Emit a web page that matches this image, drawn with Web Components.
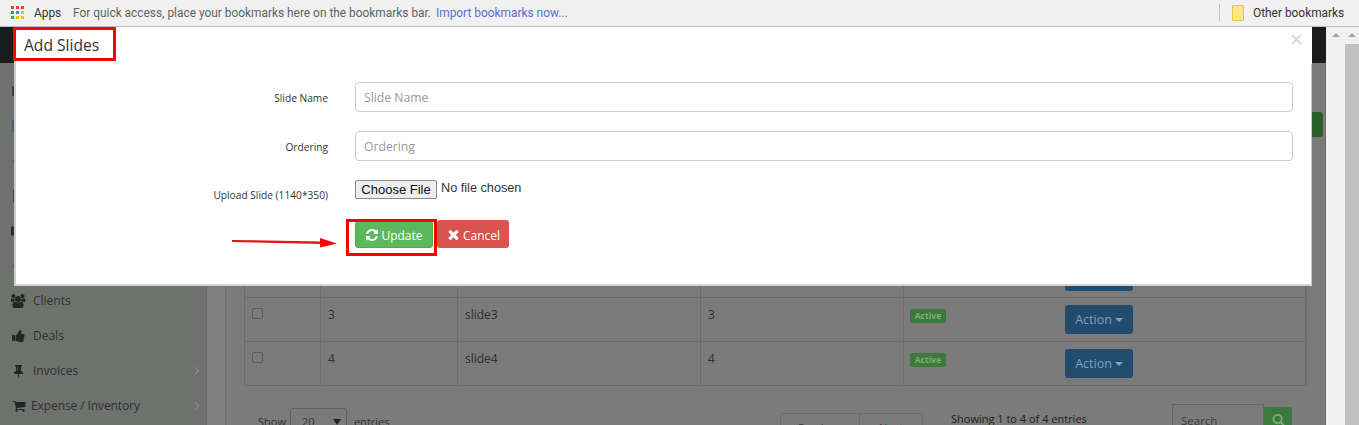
<!DOCTYPE html>
<html lang="en"><head><meta charset="utf-8"><title>Add Slides</title>
<style>
html,body{margin:0;padding:0;width:1359px;height:425px;overflow:hidden;background:#7b7b7b}
body{font-family:"Open Sans","Liberation Sans",sans-serif;position:relative}
</style></head><body>
<x-bookmark-bar></x-bookmark-bar>
<x-workspace>
  <x-page></x-page>
  <x-scrollbars></x-scrollbars>
</x-workspace>
<x-slide-modal heading="Add Slides">
  <x-field label="Slide Name" placeholder="Slide Name"></x-field>
  <x-field label="Ordering" placeholder="Ordering"></x-field>
  <x-field label="Upload Slide (1140*350)" type="file"></x-field>
</x-slide-modal>
<script>
const ICON={
 refresh:['0 0 1792 1792','M1639 1056q0 5-1 7-64 268-268 434.5t-478 166.5q-146 0-282.5-55t-243.5-157l-129 129q-19 19-45 19t-45-19-19-45v-448q0-26 19-45t45-19h448q26 0 45 19t19 45-19 45l-137 137q71 66 161 102t187 36q134 0 250-65t186-179q11-17 53-117 8-23 30-23h192q13 0 22.5 9.5t9.5 22.5zm25-800v448q0 26-19 45t-45 19h-448q-26 0-45-19t-19-45 19-45l138-138q-148-137-349-137-134 0-250 65t-186 179q-11 17-53 117-8 23-30 23h-199q-13 0-22.5-9.5t-9.5-22.5v-7q65-268 270-434.5t480-166.5q146 0 284 55.5t245 156.5l130-129q19-19 45-19t45 19 19 45z'],
 times:['0 0 1792 1792','M1490 1322q0 40-28 68l-136 136q-28 28-68 28t-68-28l-294-294-294 294q-28 28-68 28t-68-28l-136-136q-28-28-28-68t28-68l294-294-294-294q-28-28-28-68t28-68l136-136q28-28 68-28t68 28l294 294 294-294q28-28 68-28t68 28l136 136q28 28 28 68t-28 68l-294 294 294 294q28 28 28 68z'],
 search:['0 0 1792 1792','M1216 832q0-185-131.5-316.5t-316.5-131.5-316.5 131.5-131.5 316.5 131.5 316.5 316.5 131.5 316.5-131.5 131.5-316.5zm512 832q0 52-38 90t-90 38q-54 0-90-38l-343-342q-179 124-399 124-143 0-273.5-55.5t-225-150-150-225-55.5-273.5 55.5-273.5 150-225 225-150 273.5-55.5 273.5 55.5 225 150 150 225 55.5 273.5q0 220-124 399l343 343q37 37 37 90z'],
 cart:['0 0 1792 1792','M704 1536q0 52-38 90t-90 38-90-38-38-90 38-90 90-38 90 38 38 90zm896 0q0 52-38 90t-90 38-90-38-38-90 38-90 90-38 90 38 38 90zm128-1088v512q0 24-16.5 42.5t-40.5 21.5l-1044 122q13 60 13 70 0 16-24 64h920q26 0 45 19t19 45-19 45-45 19h-1024q-26 0-45-19t-19-45q0-11 8-31.5t16-36 21.5-40 15.5-29.5l-177-823h-204q-26 0-45-19t-19-45 19-45 45-19h256q16 0 28.5 6.5t19.5 15.5 13 24.5 8 26 5.5 29.5 4.5 26h1201q26 0 45 19t19 45z'],
 pin:['0 0 1152 1792','M480 864v-448q0-14-9-23t-23-9-23 9-9 23v448q0 14 9 23t23 9 23-9 9-23zm672 352q0 26-19 45t-45 19h-429l-51 483q-2 12-10.5 20.5t-20.5 8.5h-1q-27 0-32-27l-76-485h-404q-26 0-45-19t-19-45q0-123 78.5-221.5t177.5-98.5v-512q-52 0-90-38t-38-90 38-90 90-38h640q52 0 90 38t38 90-38 90-90 38v512q99 0 177.5 98.5t78.5 221.5z'],
 thumb:['0 0 1664 1792','M256 1344q0-26-19-45t-45-19-45 19-19 45 19 45 45 19 45-19 19-45zm160-512v640q0 26-19 45t-45 19h-288q-26 0-45-19t-19-45v-640q0-26 19-45t45-19h288q26 0 45 19t19 45zm1184 0q0 86-55 149 15 44 15 76 3 76-43 137 17 56 0 117-15 57-54 94 9 112-49 181-64 76-197 78h-129q-66 0-144-15.5t-121.5-29-120.5-39.5q-123-43-158-44-26-1-45-19.5t-19-44.5v-641q0-25 18-43.5t43-20.5q24-2 76-59t101-121q68-87 101-120 18-18 31-48t17.5-48.5 13.5-60.5q7-39 12.5-61t19.5-52 34-50q19-19 45-19 46 0 82.5 10.5t60 26 40 40.5 24 45 12 50 5 45 .5 39q0 38-9.5 76t-19 60-27.5 56q-3 6-10 18t-11 22-8 24h277q78 0 135 57t57 135z'],
 users:['0 0 1920 1792','M529 896q-162 5-265 128h-134q-82 0-138-40.5t-56-118.5q0-353 124-353 6 0 43.5 21t97.5 42.5 119 21.5q67 0 133-23-5 37-5 66 0 139 81 256zm1071 637q0 120-73 189.5t-194 69.5h-874q-121 0-194-69.5t-73-189.5q0-53 3.5-103.5t14-109 26.5-108.5 43-97.5 62-81 85.5-53.5 111.5-20q10 0 43 21.5t73 48 107 48 135 21.5 135-21.5 107-48 73-48 43-21.5q61 0 111.5 20t85.5 53.5 62 81 43 97.5 26.5 108.5 14 109 3.5 103.5zm-1024-1277q0 106-75 181t-181 75-181-75-75-181 75-181 181-75 181 75 75 181zm704 384q0 159-112.5 271.5t-271.5 112.5-271.5-112.5-112.5-271.5 112.5-271.5 271.5-112.5 271.5 112.5 112.5 271.5zm576 225q0 78-56 118.5t-138 40.5h-134q-103-123-265-128 81-117 81-256 0-29-5-66 66 23 133 23 59 0 119-21.5t97.5-42.5 43.5-21q124 0 124 353zm-128-609q0 106-75 181t-181 75-181-75-75-181 75-181 181-75 181 75 75 181z']
};
const svg=(n,w,h)=>`<svg width="${w}" height="${h}" viewBox="${ICON[n][0]}" fill="currentColor" aria-hidden="true"><path d="${ICON[n][1]}"/></svg>`;
function define(name,css,html,init){
  customElements.define(name,class extends HTMLElement{
    connectedCallback(){
      if(this.shadowRoot)return;
      const r=this.attachShadow({mode:'open'});
      r.innerHTML=`<style>${css}</style>`+(typeof html==='function'?html(this):html);
      if(init)init(this,r);
    }
  });
}
define('x-bookmark-bar',`
 :host{display:flex;align-items:center;box-sizing:border-box;height:27px;background:#f1f1f1;border-bottom:1px solid #bdbdbd;padding:0 0 1px 11px;font:11.9px Roboto,"Open Sans",sans-serif;color:#5f6368;white-space:nowrap}
 .apps{display:grid;grid-template-columns:repeat(3,3px);grid-auto-rows:3px;gap:2px;margin-right:10px;flex:none}
 .apps i{display:block}
 .name{color:#333;margin-right:12px;width:27px}
 .link{color:#5a6fd0;margin-left:5px}
 .sp{flex:1}
 .div{width:1px;height:17px;background:#c4c4c4;margin-right:12px}
 .folder{width:10px;height:14px;background:#fde68a;border:1px solid #eec24a;border-radius:1px;margin-right:9px}
 .other{color:#333;width:106px}
`,`<div class="apps">${['#ea4335','#ea4335','#ea4335','#34a853','#4285f4','#fbbc05','#34a853','#fbbc05','#fbbc05'].map(c=>`<i style="background:${c}"></i>`).join('')}</div>
<span class="name">Apps</span><span>For quick access, place your bookmarks here on the bookmarks bar.</span><span class="link">Import bookmarks now...</span><span class="sp"></span><span class="div"></span><span class="folder"></span><span class="other">Other bookmarks</span>`);
define('x-workspace',`:host{display:flex;height:398px;overflow:hidden}`,`<slot></slot>`);
define('x-scrollbars',`
 :host{display:flex;width:33px;flex:none;background:#f1f1f1}
 .t{display:flex;flex-direction:column;align-items:center;padding-top:6px}
 .a{width:19px}.b{width:14px}
 .up{width:0;height:0;border:4px solid transparent;border-top:0;border-bottom:4px solid #a3a3a3;margin-bottom:7px}
 .thumb{align-self:stretch;flex:1;background:#c1c1c1}
`,`<div class="t a"><div class="up"></div></div><div class="t b"><div class="up"></div><div class="thumb"></div></div>`);
define('x-page',`
 :host{display:flex;flex-direction:column;flex:1;min-width:0;background:#7e7e7e}
 .nav{height:36px;background:#1b1c1d;flex:none}
 .body{display:flex;flex:1;min-height:0}
 .side{width:206px;flex:none;background:#6f716f;border-right:1px solid #6a6a6a;padding-top:10px;color:#2f3030;font-size:12px}
 .main{flex:1;padding:0 0 0 18px;min-width:0;display:flex;flex-direction:column}
 .card{flex:1;border-left:1px solid #707070;background:#7b7b7b;padding:49px 20px 0 18px;border-right:1px solid #6b6b6b;display:flex;flex-direction:column;min-height:0}
 .tools{display:flex;justify-content:flex-end;height:25px;margin-right:-18px;margin-bottom:116px;flex:none}
 .add{width:34px;height:25px;background:#2c5e2c;border-radius:3px}
`,`<div class="nav"></div><div class="body">
 <div class="side">
  <x-side-item icon="circle"></x-side-item>
  <x-side-item icon="bars"></x-side-item>
  <x-side-item icon="dash"></x-side-item>
  <x-side-item icon="bar"></x-side-item>
  <x-side-item icon="thumb2"></x-side-item>
  <x-side-item icon="dash"></x-side-item>
  <x-side-item icon="users" text="Clients"></x-side-item>
  <x-side-item icon="thumb" text="Deals"></x-side-item>
  <x-side-item icon="pin" text="Invoices" more></x-side-item>
  <x-side-item icon="cart" text="Expense / Inventory" more tight></x-side-item>
 </div>
 <div class="main"><div class="card">
  <div class="tools"><div class="add"></div></div>
  <x-slide-table></x-slide-table>
  <x-table-foot></x-table-foot>
 </div></div>
</div>`);
define('x-side-item',`
 :host{display:flex;align-items:center;height:35px;padding-left:11px;box-sizing:border-box;color:#2f3030;font-size:12px}
 .i{width:15px;display:flex;justify-content:center;flex:none;color:#242525}
 .t{margin-left:7px;white-space:nowrap}
 :host([tight]) .t{margin-left:5px;letter-spacing:-.1px}
 .c{margin-left:auto;margin-right:8px;width:5px;height:5px;border-top:1px solid #8b8b8b;border-right:1px solid #8b8b8b;transform:rotate(45deg)}
`,h=>{
 const n=h.getAttribute('icon');
 const m={users:svg('users',15,14),thumb:svg('thumb',13,14),pin:svg('pin',9,14),cart:svg('cart',14,14)};
 const frag={circle:[1,3,10,'#453b41'],bars:[1,3,11,'#55556a'],dash:[2,2,1,'#3a3a3a'],bar:[2,2,13,'#453b41'],thumb2:[0,4,9,'#2a2a2a']}[n];
 const ic=m[n]||`<svg width="15" height="14" aria-hidden="true"><rect x="${frag[0]}" y="${7-frag[2]/2}" width="${frag[1]}" height="${frag[2]}" fill="${frag[3]}"/></svg>`;
 const t=h.getAttribute('text');
 return `<span class="i">${ic}</span>`+(t?`<span class="t">${t}</span>`:'')+(h.hasAttribute('more')?'<span class="c"></span>':'');
});
define('x-slide-table',`
 :host{display:grid;grid-template-columns:76px 137px 243px 203px 154px 249px;width:1062px;border-left:1px solid #6c6c6c;border-right:1px solid #6c6c6c;box-sizing:border-box;font-size:12px;color:#2f2f2f;flex:none}
 .c{height:44px;box-sizing:border-box;border-right:1px solid #6c6c6c;border-bottom:1px solid #6c6c6c;padding:10px 7px 0}
 .c:nth-child(6n){border-right:0}
 .p{height:45px}
 .txt{padding-top:8px}
 .box{display:block;width:11px;height:11px;border:1px solid #5c5c5c;border-radius:2px;background:#7b7b7b;box-sizing:border-box}
 .badge{display:block;width:36px;text-align:center;background:#3c7a3c;color:#7faa7f;font-size:8.6px;font-weight:700;height:14px;line-height:14px;border-radius:1px;margin:1px 0 0 -1px}
 .act{display:inline-flex;align-items:center;justify-content:center;gap:3px;width:68px;height:29px;background:#224b70;border-radius:3px;color:#84a0b8;font-size:12.5px;margin-top:-3px;box-sizing:border-box;vertical-align:top}
 .act.stub{margin-top:-1px}
 .car{border:4px solid transparent;border-top:4px solid #84a0b8;border-bottom:0}
`,()=>{
 const row=(n)=>`<div class="c"><span class="box"></span></div><div class="c txt">${n}</div><div class="c txt">slide${n}</div><div class="c txt">${n}</div><div class="c"><span class="badge">Active</span></div><div class="c"><span class="act">Action<span class="car"></span></span></div>`;
 return `<div class="c p"></div><div class="c p"></div><div class="c p"></div><div class="c p"></div><div class="c p"></div><div class="c p"><span class="act stub"></span></div>`+row(3)+row(4);
});
define('x-table-foot',`
 :host{display:flex;height:60px;font-size:11px;color:#333;white-space:nowrap;align-items:flex-start;flex:none}
 span{flex:none}
 .show{margin:28px 0 0 14px;width:26px}
 .sel{box-sizing:border-box;width:57px;height:30px;border:1px solid #5f5f5f;border-radius:3px;margin:22px 7px 0 6px;padding:5px 0 0 11px;display:flex;justify-content:space-between;color:#333}
 .sel i{width:0;height:0;border:4px solid transparent;border-top:6px solid #222;border-bottom:0;margin:5px 5px 0 0}
 .ent{margin-top:28px;width:32px}
 .pg{display:flex;margin:27px 0 0 394px;color:#3a3a3a}
 .pg span{box-sizing:border-box;height:24px;border:1px solid #6c6c6c;padding-top:6px;text-align:center}
 .pg .p{width:80px;border-radius:3px 0 0 3px}.pg .n{width:63px;border-left:0;border-radius:0 3px 3px 0}
 .info{margin:25px 0 0 28px;color:#222;width:127px}
 .s{box-sizing:border-box;width:92px;height:32px;border:1px solid #666;margin:18px 0 0 94px;padding:8px 0 0 8px;color:#3d3d3d;font-size:11.5px}
 .go{width:28px;height:30px;margin-top:21px;background:#3c7a3c;color:#7fa77f;display:flex;justify-content:center;padding-top:6px;box-sizing:border-box;border-radius:0 2px 2px 0}
`,`<span class="show">Show</span><span class="sel">20<i></i></span><span class="ent">entries</span><span class="pg"><span class="p">Previous</span><span class="n">Next</span></span><span class="info">Showing 1 to 4 of 4 entries</span><span class="s">Search</span><span class="go">${svg('search',13,13)}</span>`);
define('x-field',`
 :host{display:flex;align-items:flex-start;height:49px;font-family:"Open Sans",sans-serif}
 label{box-sizing:border-box;width:312px;flex:none;text-align:right;font-size:10.2px;color:#333;padding-top:8px;line-height:16px}
 .ctl{margin-left:27px;flex:none;width:938px}
 .in{box-sizing:border-box;height:30px;width:938px;border:1px solid #ccc;border-radius:4px;padding:0 8px;font-size:12.2px;line-height:30px;color:#999}
 .file{display:flex;align-items:flex-start;font:13px "Liberation Sans",Arial,sans-serif;color:#333}
 .fb{box-sizing:border-box;width:82px;height:19px;background:#efefef;border:1px solid #8a8a8a;border-radius:2px;color:#111;text-align:center;line-height:18px;margin-right:4px}
 .fn{line-height:15px;font-size:12.7px;margin-top:1px}
 :host([type=file]) label{padding-top:7px}
`,h=>{
 const ctl=h.getAttribute('type')==='file'?`<div class="file"><span class="fb">Choose File</span><span class="fn">No file chosen</span></div>`:`<div class="in">${h.getAttribute('placeholder')}</div>`;
 return `<label>${h.getAttribute('label')}</label><div class="ctl">${ctl}</div>`;
});
define('x-slide-modal',`
 :host{position:absolute;left:14px;top:27px;width:1298px;height:259px;box-sizing:border-box;background:#fff;border-left:2px solid #ccc;border-bottom:2px solid #d4d4d4;display:block}
 .edge{position:absolute;right:0;top:37px;bottom:0;width:1px;background:#c9c9c9}
 .head{height:55px;box-sizing:border-box;padding:7px 0 0 8px;font-size:15.6px;line-height:22px;color:#333}
 .x{position:absolute;left:1275px;top:7px;color:#d2d2d2;display:block}
 .acts{display:flex;align-items:flex-start;margin:-9px 0 0 339px;gap:4px;font-size:12px;color:#fff}
 .b{display:flex;align-items:center;justify-content:center;box-sizing:border-box;height:28px;border-radius:3px;gap:2px;padding-top:1px}
 .u{width:78px;background:#5cb85c;border:1px solid #4cae4c;height:27px;margin-top:1px}
 .c{width:72px;background:#d9534f;padding-top:2px}
 .c svg{margin-top:-1px}
 .mark{position:absolute;box-sizing:border-box;border:3px solid #f00}
 .m1{left:-3px;top:0;width:103px;height:34px}
 .m2{left:330px;top:192px;width:91px;height:37px}
 .arrow{position:absolute;left:216px;top:210px}
`,h=>`<div class="head">${h.getAttribute('heading')}</div>
<svg class="x" width="11" height="11" viewBox="0 0 11 11" aria-hidden="true"><path d="M1 1l9 9M10 1l-9 9" stroke="currentColor" stroke-width="1.6" fill="none"/></svg>
<div><slot></slot></div>
<div class="acts"><span class="b u">${svg('refresh',14,14)}Update</span><span class="b c">${svg('times',15,15)}Cancel</span></div>
<div class="edge"></div>
<div class="mark m1"></div><div class="mark m2"></div>
<svg class="arrow" width="106" height="12" viewBox="0 0 106 12" aria-hidden="true"><path d="M0 3L90 4.4L90 7L0 5Z" fill="#e8141c"/><path d="M88 1L105 6.5L88 10.5Z" fill="#f00"/></svg>`);
</script>
</body></html>
